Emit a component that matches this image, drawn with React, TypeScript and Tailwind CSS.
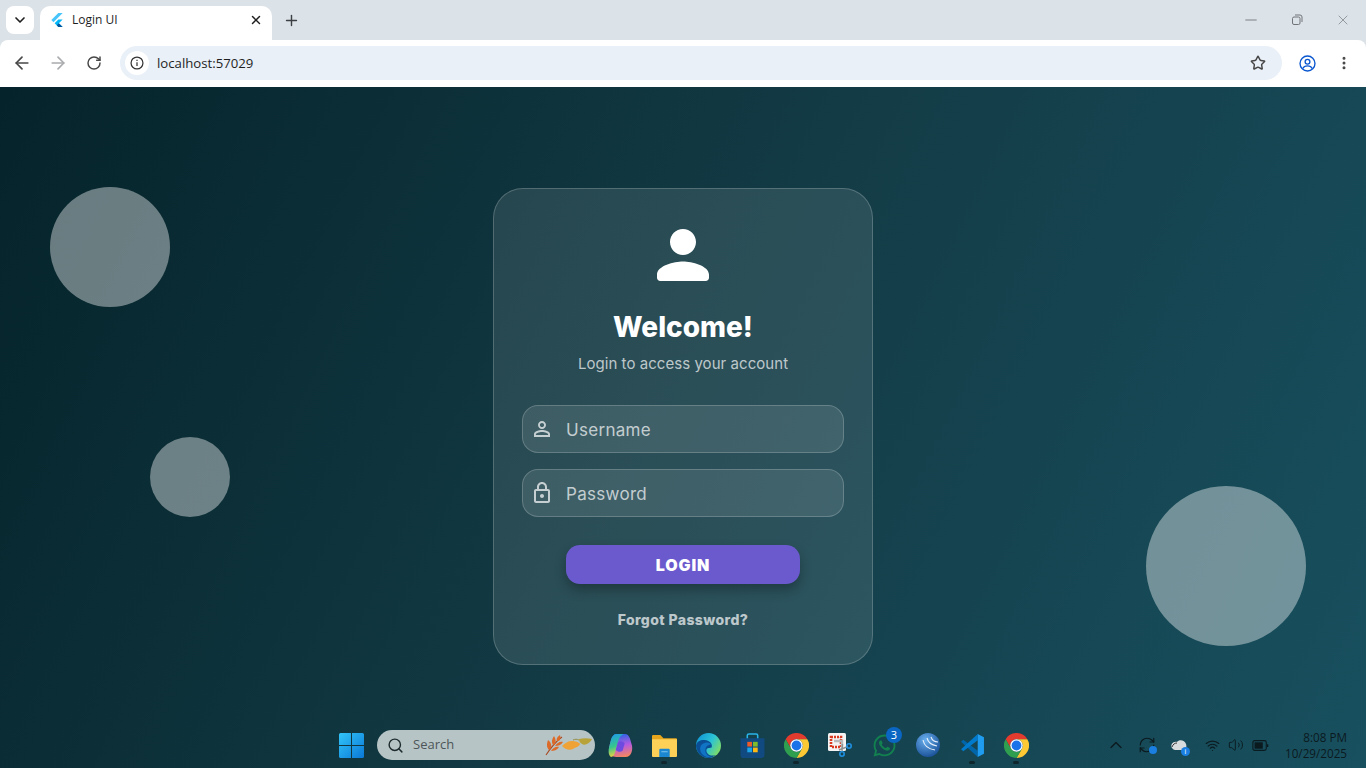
import { ArrowLeft, ArrowRight, ChevronDown, ChevronUp, EllipsisVertical, Minus, Plus, RefreshCw, RotateCw, Search, Star, Volume2, Wifi, X } from 'lucide-react';
import { FaWhatsapp } from 'react-icons/fa';

const uiFont = "font-['Open_Sans','Noto_Sans',sans-serif]";
const formFont = "font-['Inter','Noto_Sans',sans-serif]";

function FlutterLogo() {
  return (
    <svg viewBox="0 0 24 24" className="w-[14px] h-[14px] shrink-0">
      <path d="M14.3 0 2.3 12 6 15.7 21.7 0z" fill="#47c5fb" />
      <path d="M14.3 11.1 7.9 17.5l6.4 6.5h7.4l-6.5-6.5 6.500-6.400z" fill="#00b5f8" />
      <path d="m11.6 21.2 2.7 2.8h7.4l-6.5-6.5z" fill="#00569e" />
    </svg>
  );
}

function WindowsLogo() {
  return (
    <svg viewBox="0 0 24 24" className="w-[25px] h-[25px]">
      <defs>
        <linearGradient id="win" x1="0" y1="0" x2="1" y2="1">
          <stop offset="0" stopColor="#32c5f9" />
          <stop offset="1" stopColor="#0a78d6" />
        </linearGradient>
      </defs>
      <path d="M0 1.500A1.500 1.500 0 0 1 1.500 0h10v11.500H0z M12.500 0h10A1.500 1.500 0 0 1 24 1.500v10H12.500z M0 12.500h11.500V24h-10A1.500 1.500 0 0 1 0 22.500z M12.500 12.500H24v10a1.500 1.500 0 0 1-1.500 1.500h-10z" fill="url(#win)" />
    </svg>
  );
}

function Leaves() {
  return (
    <svg viewBox="0 0 48 24" className="w-[48px] h-[24px] shrink-0">
      <path d="M1 22C5 16 10 9 17 4" stroke="#a8471f" strokeWidth="1.1" fill="none" />
      <path d="M4 17C1 14 2 10 3 7c3 2 4 6 3 8zM8 12C6 9 7 6 9 3c2 3 2 6 1 8zM12 8c-1-2 0-4 3-6 1 2 0 5-1 6zM6 18c3 0 6-1 8-4-3-1-6 1-8 4zM10 13c3 0 6-1 8-4-3-1-6 1-8 4z" fill="#dc6a28" />
      <path d="M17 13c3-3 6-5 10-5 3 0 7 1 8 3-1 3-4 3-7 5-4 2-8 0-11-3z" fill="#efa236" />
      <path d="M28 7c2-1 4-1 6 0" stroke="#8d8a3c" strokeWidth="0.9" fill="none" />
      <path d="M34 6c4-1 9-1 13 0-2 4-7 7-10 5-2-1-3-3-3-5z" fill="#b8a33a" />
    </svg>
  );
}

function Copilot() {
  return (
    <svg viewBox="0 0 24 24" className="w-[25px] h-[25px]">
      <defs>
        <linearGradient id="cpa" x1="0.2" y1="0" x2="0.4" y2="1">
          <stop offset="0" stopColor="#1e9be6" />
          <stop offset="0.55" stopColor="#37c68c" />
          <stop offset="1" stopColor="#f5d33b" />
        </linearGradient>
        <linearGradient id="cpb" x1="0.5" y1="0" x2="0.7" y2="1">
          <stop offset="0" stopColor="#2b62e6" />
          <stop offset="0.5" stopColor="#b65be0" />
          <stop offset="1" stopColor="#f4875a" />
        </linearGradient>
      </defs>
      <path d="M8 1h8c3 0 4 2 5 4l2 7c1 5-1 11-6 11H8c-4 0-8-2-7-9l2-8c1-3 3-5 5-5z" fill="url(#cpb)" />
      <path d="M8 1h7c-2 1-4 3-5 6l-3 11c-1 3-2 5-4 5-2-1-3-4-2-9l2-8c1-3 3-5 5-5z" fill="url(#cpa)" />
      <path d="M9.500 9c2-2 5-1 6.500 1l-2 7c-2 2-5 1-6.500-1z" fill="#6d4be0" />
    </svg>
  );
}

function Folder() {
  return (
    <svg viewBox="0 0 24 24" className="w-[25px] h-[25px]">
      <path d="M0 3a1 1 0 0 1 1-1h7l3 3h12a1 1 0 0 1 1 1v3H0z" fill="#e5a51c" />
      <path d="M0 6h24v16a1 1 0 0 1-1 1H1a1 1 0 0 1-1-1z" fill="#fdd158" />
      <path d="M7 16a1 1 0 0 1 1-1h8a1 1 0 0 1 1 1v7H7z" fill="#1b86d1" />
      <path d="M9 18h6" stroke="#7cc4ee" strokeWidth="1" />
    </svg>
  );
}

function Edge() {
  return (
    <svg viewBox="0 0 24 24" className="w-[25px] h-[25px]">
      <defs>
        <linearGradient id="edg" x1="0" y1="0" x2="1" y2="0.6">
          <stop offset="0" stopColor="#0c8fd6" />
          <stop offset="0.6" stopColor="#2cc3d5" />
          <stop offset="1" stopColor="#7bdc6a" />
        </linearGradient>
      </defs>
      <circle cx="12" cy="12" r="12" fill="url(#edg)" />
      <path d="M0 12C1 7 6 6 10 7c4 1 6 4 5 7-3 1-5 0-5 3 0 3 4 6 9 4-2 2-5 3-7 3C5 24 0 18 0 12z" fill="#0a4f95" />
      <path d="M4 15c0-4 3-6 7-6 2 0 3 1 4 2-4 0-6 2-6 6 0 3 3 6 7 6-6 1-12-2-12-8z" fill="#1173c4" />
    </svg>
  );
}

function Store() {
  return (
    <svg viewBox="0 0 24 24" className="w-[25px] h-[25px]">
      <path d="M7 7V2.500A1.500 1.500 0 0 1 8.500 1h7A1.500 1.500 0 0 1 17 2.500V7" stroke="#28b4e8" strokeWidth="1.500" fill="none" />
      <path d="M0.500 5h23v16a3 3 0 0 1-3 3h-17a3 3 0 0 1-3-3z" fill="#114a80" />
      <rect x="7" y="8.500" width="4.500" height="4.500" fill="#ef5a29" />
      <rect x="12.500" y="8.500" width="4.500" height="4.500" fill="#7fba2c" />
      <rect x="7" y="14" width="4.500" height="4.500" fill="#1ca4e8" />
      <rect x="12.500" y="14" width="4.500" height="4.500" fill="#fdb813" />
    </svg>
  );
}

function ChromeLogo() {
  return (
    <svg viewBox="0 0 24 24" className="w-[25px] h-[25px]">
      <path d="M1.600 6A12 12 0 0 1 22.400 6H12a6 6 0 0 0-5.200 9z" fill="#e33b2e" />
      <path d="M22.400 6A12 12 0 0 1 12 24l5.200-9A6 6 0 0 0 12 6z" fill="#fcc934" />
      <path d="M12 24A12 12 0 0 1 1.600 6l5.200 9a6 6 0 0 0 10.400 0z" fill="#2f9e4f" />
      <circle cx="12" cy="12" r="6" fill="#fff" />
      <circle cx="12" cy="12" r="4.700" fill="#1a73e8" />
    </svg>
  );
}

function Snip() {
  return (
    <svg viewBox="0 0 26 26" className="w-[26px] h-[26px]">
      <rect x="1" y="1" width="18" height="18" rx="1.500" fill="#f4f4f4" />
      <rect x="4" y="5" width="10" height="10" fill="none" stroke="#d8391f" strokeWidth="2.600" strokeDasharray="2 1" />
      <path d="M7 9h8v8" stroke="#b9b9b9" strokeWidth="2.400" fill="none" />
      <path d="M12 18 21 14.500M15.500 12l-.5 8" stroke="#8a8f92" strokeWidth="1.400" />
      <circle cx="22" cy="14" r="2.200" fill="none" stroke="#1f8fe0" strokeWidth="1.600" />
      <circle cx="15" cy="22" r="2.200" fill="none" stroke="#1f8fe0" strokeWidth="1.600" />
    </svg>
  );
}

function WinBall() {
  return (
    <svg viewBox="0 0 24 24" className="w-[24px] h-[24px]">
      <defs>
        <radialGradient id="ball" cx="0.4" cy="0.3" r="0.8">
          <stop offset="0" stopColor="#6ab0ee" />
          <stop offset="1" stopColor="#12478f" />
        </radialGradient>
      </defs>
      <circle cx="12" cy="12" r="12" fill="url(#ball)" />
      <path d="M7 7c1 5 5 9 12 10M11 5c1 4 4 7 10 8M15 4c1 3 3 5 7 5" stroke="#e8f1fb" strokeWidth="1.100" fill="none" />
    </svg>
  );
}

function VsCode() {
  return (
    <svg viewBox="0 0 24 24" className="w-[25px] h-[25px]">
      <path d="M17 23V17L3.200 6.500 1 8.400z" fill="#0065a9" />
      <path d="M17 1v6L3.200 17.500 1 15.600z" fill="#007acc" />
      <path d="M17 1l6 3v16l-6 3z" fill="#1f9cf0" />
    </svg>
  );
}

function TaskIcon({ children, running }: { children: React.ReactNode; running?: boolean }) {
  return (
    <div className="relative w-[44px] h-[46px] flex items-center justify-center">
      {children}
      {running && <span className="absolute bottom-[4px] left-[19px] w-[6px] h-[3px] rounded-full bg-[#10262d]" />}
    </div>
  );
}

function BrowserChrome() {
  return (
    <div className={`${uiFont} shrink-0`}>
      <div className="h-[40px] bg-[#dbe2e8] flex items-start relative">
        <button className="ml-[6px] mt-[6px] w-[28px] h-[28px] rounded-lg bg-white flex items-center justify-center">
          <ChevronDown className="w-4 h-4 text-[#1f1f1f]" strokeWidth={2.5} />
        </button>
        <div className="ml-[6px] mt-[6px] w-[232px] h-[34px] bg-white rounded-t-[10px] flex items-center pl-[10px] pr-[9px] pb-[6px]">
          <FlutterLogo />
          <span className="ml-[8px] flex-1 text-[12px] text-[#1f1f1f]">Login UI</span>
          <X className="w-[14px] h-[14px] text-[#1f1f1f]" strokeWidth={2.5} />
        </div>
        <Plus className="ml-[11px] mt-[12px] w-[17px] h-[17px] text-[#3c4043]" strokeWidth={2} />
        <div className="ml-auto flex items-center h-[40px] text-[#707478]">
          <Minus className="w-[18px] h-[18px] mr-[31px]" strokeWidth={1.2} />
          <svg viewBox="0 0 12 12" className="w-[12px] h-[12px] mr-[32px]" fill="none" stroke="currentColor">
            <rect x="1.500" y="3" width="7.500" height="7.500" rx="1.500" />
            <path d="M4 1h5a2 2 0 0 1 2 2v5" />
          </svg>
          <X className="w-[16px] h-[16px] mr-[15px]" strokeWidth={1} />
        </div>
      </div>
      <div className="h-[47px] bg-[#dbe2e8]">
        <div className="h-full bg-white rounded-t-[8px] flex items-center pb-[1px]">
          <ArrowLeft className="ml-[12px] w-[20px] h-[20px] text-[#474747]" strokeWidth={2} />
          <ArrowRight className="ml-[16px] w-[20px] h-[20px] text-[#a9abad]" strokeWidth={2} />
          <RotateCw className="ml-[18px] w-[16px] h-[16px] text-[#474747]" strokeWidth={2.2} />
          <div className="ml-[18px] w-[1162px] h-[34px] rounded-full bg-[#e9f0f8] flex items-center pl-[5px] pr-[16px]">
            <div className="w-[24px] h-[24px] rounded-full bg-white flex items-center justify-center">
              <svg viewBox="0 0 16 16" className="w-[14px] h-[14px]" fill="none" stroke="#333" strokeWidth="1.400">
                <circle cx="8" cy="8" r="6.800" />
                <path d="M8 7v4.500M8 4.200v1.400" />
              </svg>
            </div>
            <span className="ml-[8px] pt-[1px] flex-1 text-[13.2px] text-[#1f1f1f]">localhost:57029</span>
            <Star className="w-[16px] h-[16px] text-[#474747]" strokeWidth={2.2} />
          </div>
          <svg viewBox="0 0 20 20" className="ml-[17px] w-[17px] h-[17px]" fill="none" stroke="#0b57d0" strokeWidth="1.600">
            <circle cx="10" cy="10" r="8.800" />
            <circle cx="10" cy="8" r="2.800" />
            <path d="M4.500 16c1-2.500 3-3.200 5.500-3.200s4.500 .7 5.500 3.200" />
          </svg>
          <EllipsisVertical className="ml-[20px] w-[16px] h-[16px] text-[#474747]" strokeWidth={2.5} />
        </div>
      </div>
    </div>
  );
}

function Taskbar() {
  return (
    <div className={`${uiFont} absolute bottom-0 left-0 right-0 h-[46px] flex items-center pl-[339px]`}>
      <WindowsLogo />
      <div className="ml-[13px] w-[218px] h-[30px] rounded-full bg-[#b7c4c5] flex items-center pl-[10px] pr-[2px]">
        <Search className="w-[17px] h-[17px] text-[#1d2a2e]" strokeWidth={2} />
        <span className="ml-[9px] flex-1 text-[13px] text-[#4c5659]">Search</span>
        <Leaves />
      </div>
      <div className="ml-[3px] flex items-center">
        <TaskIcon><Copilot /></TaskIcon>
        <TaskIcon running><Folder /></TaskIcon>
        <TaskIcon><Edge /></TaskIcon>
        <TaskIcon><Store /></TaskIcon>
        <TaskIcon running><ChromeLogo /></TaskIcon>
        <TaskIcon><Snip /></TaskIcon>
        <TaskIcon>
          <FaWhatsapp className="w-[25px] h-[25px] text-[#12814f]" />
          <span className="absolute top-[5px] left-[24px] w-[16px] h-[16px] rounded-full bg-[#0a66c2] text-white text-[11px] leading-[16px] text-center">3</span>
        </TaskIcon>
        <TaskIcon><WinBall /></TaskIcon>
        <TaskIcon running><VsCode /></TaskIcon>
        <TaskIcon running><ChromeLogo /></TaskIcon>
      </div>
      <div className="ml-auto flex items-center pr-[19px] text-[#0b1a1f]">
        <ChevronUp className="w-[20px] h-[20px]" strokeWidth={1.6} />
        <div className="relative ml-[12px] w-[18px] h-[18px]">
          <RefreshCw className="w-[18px] h-[18px]" strokeWidth={1.6} />
          <span className="absolute right-[-1px] bottom-[0px] w-[8px] h-[8px] rounded-full bg-[#1a7fe0]" />
        </div>
        <div className="relative ml-[14px] w-[18px] h-[18px]">
          <svg viewBox="0 0 18 18" className="w-[18px] h-[18px]">
            <path d="M2 12c-2-3 1-7 5-6 2-3 8-2 9 2 1 3 0 6-3 6H5c-1 0-2-1-3-2z" fill="#d8dcdc" />
            <path d="M2 11c1-3 3-4 5-4" stroke="#333" fill="none" />
          </svg>
          <span className="absolute right-[-2px] bottom-[-2px] w-[9px] h-[9px] rounded-full bg-[#1a7fe0] text-white text-[7px] leading-[9px] text-center">i</span>
        </div>
        <Wifi className="ml-[17px] w-[15px] h-[15px]" strokeWidth={1.800} />
        <Volume2 className="ml-[8px] w-[16px] h-[16px]" strokeWidth={1.400} />
        <svg viewBox="0 0 18 12" className="ml-[8px] w-[17px] h-[11px]" fill="none" stroke="currentColor">
          <rect x="0.700" y="0.700" width="14.600" height="10.600" rx="2" strokeWidth="1.200" />
          <rect x="2.500" y="2.500" width="9" height="7" fill="currentColor" stroke="none" />
          <path d="M16.800 4.500v3" strokeWidth="1.400" />
        </svg>
        <div className="ml-[16px] w-[62px] whitespace-nowrap text-right text-[11.7px] leading-[16px]">
          <div>8:08 PM</div>
          <div>10/29/2025</div>
        </div>
      </div>
    </div>
  );
}

function LoginField({ label, children }: { label: string; children: React.ReactNode }) {
  return (
    <div className="h-[48px] rounded-[16px] bg-white/10 border border-white/20 flex items-center pl-[7px]">
      {children}
      <span className="ml-[12px] pt-[3px] text-[17px] text-white/70 tracking-[0.3px]">{label}</span>
    </div>
  );
}

function LoginCard() {
  return (
    <div className={`${formFont} relative w-[380px] h-[477px] rounded-[30px] bg-white/10 border border-white/20 pt-[27px] px-[28px] flex flex-col items-center`}>
      <svg viewBox="0 0 24 24" className="w-[78px] h-[78px]" fill="#fff">
        <path d="M12 12c2.210 0 4-1.790 4-4s-1.790-4-4-4-4 1.790-4 4 1.790 4 4 4zm0 2c-2.670 0-8 1.340-8 4v1c0 .55.45 1 1 1h14c.55 0 1-.45 1-1v-1c0-2.660-5.330-4-8-4z" />
      </svg>
      <h1 className="mt-[12px] text-[28px] leading-[42px] font-extrabold text-white">Welcome!</h1>
      <p className="mt-[4px] text-[15px] leading-[24px] tracking-[0.05px] text-white/70">Login to access your account</p>
      <div className="mt-[29px] w-full flex flex-col gap-[16px]">
        <LoginField label="Username">
          <svg viewBox="0 0 24 24" className="w-[24px] h-[24px]" fill="#ffffffb3">
            <path d="M12 5.900c1.160 0 2.100.94 2.100 2.100s-.94 2.100-2.100 2.100S9.900 9.160 9.900 8s.94-2.100 2.100-2.100m0 9c2.970 0 6.100 1.460 6.100 2.100v1.100H5.900V17c0-.64 3.130-2.100 6.100-2.100M12 4C9.790 4 8 5.790 8 8s1.790 4 4 4 4-1.790 4-4-1.790-4-4-4zm0 9c-2.670 0-8 1.340-8 4v3h16v-3c0-2.660-5.330-4-8-4z" />
          </svg>
        </LoginField>
        <LoginField label="Password">
          <svg viewBox="0 0 24 24" className="w-[24px] h-[24px]" fill="#ffffffb3">
            <path d="M18 8h-1V6c0-2.760-2.240-5-5-5S7 3.240 7 6v2H6c-1.100 0-2 .9-2 2v10c0 1.100.9 2 2 2h12c1.100 0 2-.9 2-2V10c0-1.100-.9-2-2-2zM9 6c0-1.660 1.340-3 3-3s3 1.340 3 3v2H9V6zm9 14H6V10h12v10zm-6-3c1.100 0 2-.9 2-2s-.9-2-2-2-2 .9-2 2 .9 2 2 2z" />
          </svg>
        </LoginField>
      </div>
      <button className="mt-[28px] w-[234px] h-[39px] rounded-[14px] bg-[#6a5acd] text-white text-[16px] font-black tracking-[0.9px] shadow-[0_6px_12px_rgba(0,0,0,0.28)]">
        LOGIN
      </button>
      <a className="mt-[25px] text-[14px] leading-[22px] font-extrabold tracking-[0.4px] text-white/70">Forgot Password?</a>
    </div>
  );
}

export default function App() {
  return (
    <div className="w-[1366px] h-[768px] overflow-hidden flex flex-col bg-[#0c2a33]">
      <BrowserChrome />
      <main className="relative flex-1 flex items-center justify-center pb-[2px] bg-[linear-gradient(116deg,#05232a_0%,#133b45_50%,#18505f_100%)]">
        <span className="absolute left-[50px] top-[100px] w-[120px] h-[120px] rounded-full bg-white/40" />
        <span className="absolute left-[150px] top-[350px] w-[80px] h-[80px] rounded-full bg-white/40" />
        <span className="absolute left-[1146px] top-[399px] w-[160px] h-[160px] rounded-full bg-white/40" />
        <LoginCard />
        <Taskbar />
      </main>
    </div>
  );
}
